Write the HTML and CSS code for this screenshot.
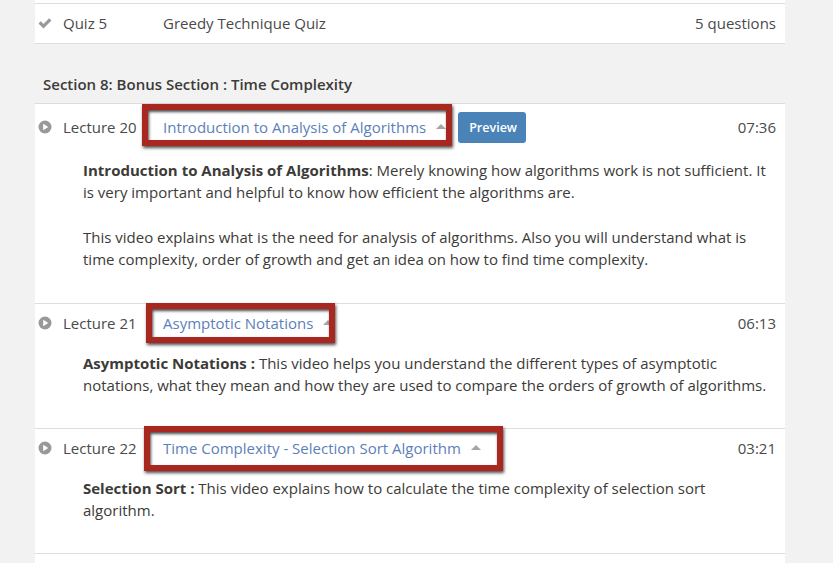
FILE: index.html
```html
<!DOCTYPE html>
<html lang="en">
<head>
<meta charset="utf-8">
<title>Curriculum</title>
<link rel="stylesheet" href="styles.css">
</head>
<body>
<main class="curriculum">
  <div class="row-head row-quiz">
    <svg class="icon" viewBox="0 0 14 14"><path d="M0.500 7.500l2.300-2.300 2.700 2.700 5.700-5.700 2.300 2.300-8 8z"/></svg>
    <span class="kind">Quiz 5</span>
    <span class="quiz-title">Greedy Technique Quiz</span>
    <span class="meta">5 questions</span>
  </div>

  <h2 class="section-title">Section 8: Bonus Section : Time Complexity</h2>

  <section class="lecture lecture-20">
    <div class="row-head">
      <svg class="icon" viewBox="0 0 14 14"><circle cx="7" cy="7" r="6.500"/><path class="play" d="M5.200 3.800v6.400L10.200 7z"/></svg>
      <span class="kind">Lecture 20</span>
      <span class="title">
        <a href="#" class="link">Introduction to Analysis of Algorithms</a><i class="caret"></i>
        <span class="mark mark-20"></span>
      </span>
      <a href="#" class="preview">Preview</a>
      <span class="meta">07:36</span>
    </div>
    <div class="desc">
      <p><b>Introduction to Analysis of Algorithms</b>: Merely knowing how algorithms work is not sufficient. It is very important and helpful to know how efficient the algorithms are.</p>
      <p>This video explains what is the need for analysis of algorithms. Also you will understand what is time complexity, order of growth and get an idea on how to find time complexity.</p>
    </div>
  </section>

  <section class="lecture lecture-21">
    <div class="row-head">
      <svg class="icon" viewBox="0 0 14 14"><circle cx="7" cy="7" r="6.500"/><path class="play" d="M5.200 3.800v6.400L10.200 7z"/></svg>
      <span class="kind">Lecture 21</span>
      <span class="title">
        <a href="#" class="link">Asymptotic Notations</a><i class="caret"></i>
        <span class="mark mark-21"></span>
      </span>
      <span class="meta">06:13</span>
    </div>
    <div class="desc">
      <p><b>Asymptotic Notations :</b> This video helps you understand the different types of asymptotic notations, what they mean and how they are used to compare the orders of growth of algorithms.</p>
    </div>
  </section>

  <section class="lecture lecture-22">
    <div class="row-head">
      <svg class="icon" viewBox="0 0 14 14"><circle cx="7" cy="7" r="6.500"/><path class="play" d="M5.200 3.800v6.400L10.200 7z"/></svg>
      <span class="kind">Lecture 22</span>
      <span class="title">
        <a href="#" class="link">Time Complexity - Selection Sort Algorithm</a><i class="caret"></i>
        <span class="mark mark-22"></span>
      </span>
      <span class="meta">03:21</span>
    </div>
    <div class="desc">
      <p><b>Selection Sort :</b> This video explains how to calculate the time complexity of selection sort algorithm.</p>
    </div>
  </section>

  <div class="tail"></div>
</main>
</body>
</html>
```
FILE: styles.css
```css
html, body {
  margin: 0;
  height: 563px;
  overflow: hidden;
  background: #f2f2f2;
}

body {
  font-family: "Open Sans", sans-serif;
  font-size: 15px;
  line-height: 22px;
  color: #3c3b37;
}

.curriculum {
  width: 750px;
  margin-left: 35px;
  padding-top: 3px;
  background: linear-gradient(#fff 3px, transparent 3px);
}

.row-head {
  display: flex;
  align-items: center;
  height: 39px;
  margin-bottom: 9px;
  padding: 0 9px 2px 3px;
  box-sizing: border-box;
}

.row-quiz {
  height: 41px;
  margin-bottom: 0;
  background: #fff;
  border-top: 1px solid #ddd;
  border-bottom: 1px solid #ddd;
}

.lecture-20 .row-head {
  height: 47px;
  margin-bottom: 8px;
}

.icon {
  width: 14px;
  height: 14px;
  flex: none;
  fill: #999;
}

.play {
  fill: #fff;
}

.kind {
  margin-left: 11px;
  width: 100px;
  flex: none;
  color: #4a4a4a;
}

.quiz-title {
  color: #4a4a4a;
}

.title {
  position: relative;
  display: inline-flex;
  align-items: center;
}

.link {
  color: #5b7fb9;
  text-decoration: none;
}

.caret {
  width: 0;
  height: 0;
  margin-left: 10px;
  border-left: 5px solid transparent;
  border-right: 5px solid transparent;
  border-bottom: 5px solid #a6a6a6;
}

.mark {
  position: absolute;
  box-sizing: border-box;
  border: 6px solid #a82820;
  box-shadow: 1px 2px 3px rgba(0, 0, 0, 0.7), inset 1px 2px 3px rgba(0, 0, 0, 0.7);
}

.mark-20 { left: -21px; right: -6px; top: -12px; bottom: -8px; }
.mark-21 { left: -17px; right: -2px; top: -9px; bottom: -9px; }
.mark-22 { left: -19px; right: -22px; top: -11px; bottom: -12px; }

.preview {
  margin-top: 2px;
  margin-left: 12px;
  padding: 4px 9px 4px 11px;
  font-size: 12.500px;
  line-height: 23px;
  font-weight: 600;
  color: #fff;
  background: #4a83b8;
  border-radius: 3px;
  text-decoration: none;
}

.meta {
  margin-left: auto;
  color: #4a4a4a;
}

.section-title {
  margin: 0;
  padding: 29px 0 8px 8px;
  font-size: 15px;
  line-height: 22px;
  font-weight: 600;
  color: #3c3b37;
}

.lecture {
  background: #fff;
  border-top: 1px solid #ddd;
}

.desc {
  padding: 0 18px 0 48px;
}

.desc p {
  margin: 0 0 23px;
}

.desc b {
  font-weight: 700;
}

.lecture-20 { height: 199px; }
.lecture-21 { height: 124px; }
.lecture-22 { height: 124px; }

.tail {
  height: 20px;
  background: #fff;
  border-top: 1px solid #ddd;
}
```
